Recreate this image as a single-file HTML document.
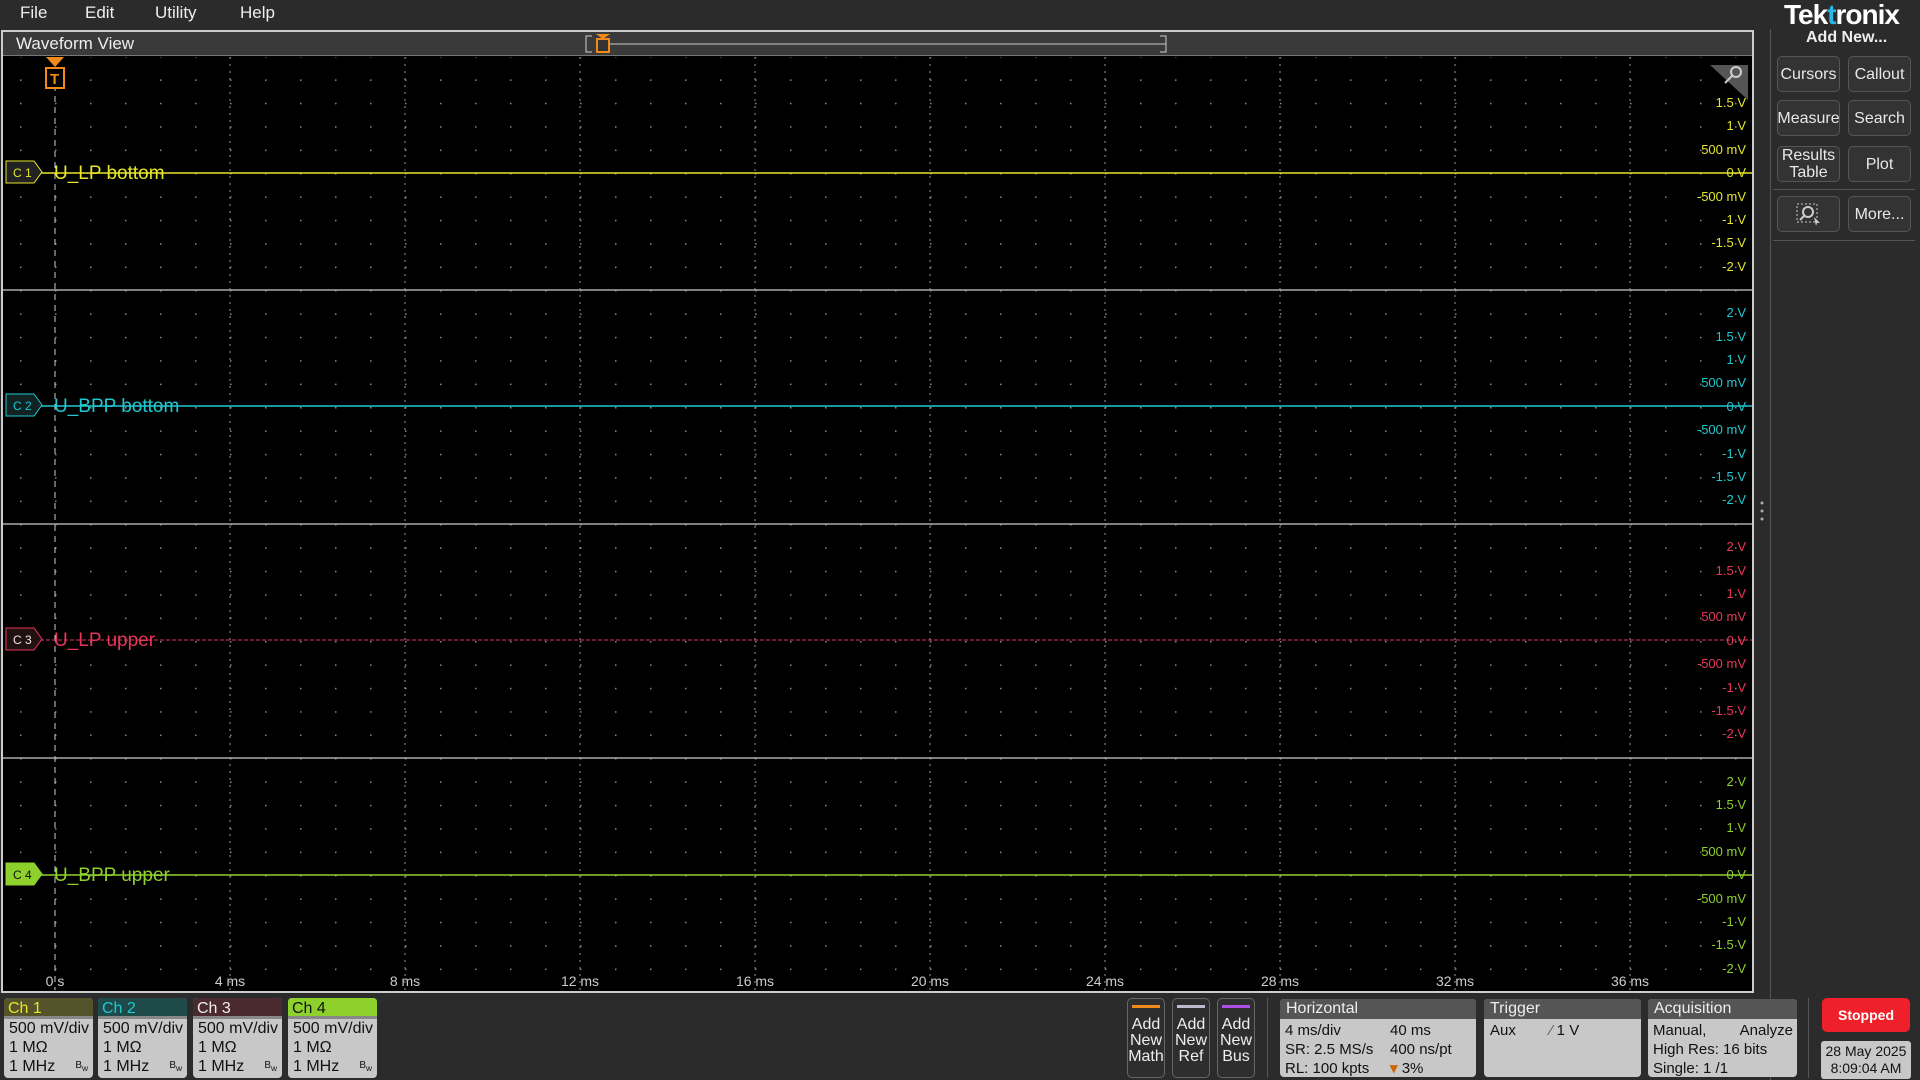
<!DOCTYPE html>
<html><head><meta charset="utf-8"><style>
*{margin:0;padding:0;box-sizing:border-box}
body{width:1920px;height:1080px;background:#2b2b2b;font-family:"Liberation Sans",sans-serif;color:#ddd;position:relative;overflow:hidden}
.a{position:absolute}
.menu{font-size:17px;color:#eee;top:3px}
.btn{position:absolute;width:63px;height:36px;background:#333;border:1px solid #555;border-radius:5px;color:#e8e8e8;font-size:16px;display:flex;align-items:center;justify-content:center;text-align:center;line-height:17px}
.ch{position:absolute;top:998px;width:89px;height:80px;background:#c8c8c8;border-radius:4px;overflow:hidden;color:#111;font-size:16px}
.ch .h{height:21px;padding-left:4px;font-size:16px;line-height:21px;border-bottom:3px solid #888}
.ch .r{padding-left:5px;line-height:19px;white-space:nowrap}
.ch .bw{position:absolute;right:5px;bottom:5px;font-size:10px}
.an{position:absolute;top:998px;width:38px;height:80px;background:#2e2e2e;border:1px solid #666;border-radius:5px;color:#eee;font-size:16px;text-align:center;line-height:16px;padding-top:18px}
.bx{position:absolute;top:999px;height:78px;background:#c8c8c8;border-radius:4px;overflow:hidden;color:#111;font-size:15px}
.bx .h{height:20px;background:#555;color:#eee;padding-left:6px;line-height:20px;font-size:16px}
</style></head><body>
<div class="a menu" style="left:20px">File</div>
<div class="a menu" style="left:85px">Edit</div>
<div class="a menu" style="left:155px">Utility</div>
<div class="a menu" style="left:240px">Help</div>
<div class="a" style="left:1784px;top:-1px;font-size:28px;font-weight:bold;color:#fff;letter-spacing:-1px">Tek<span style="color:#2ab7e6">t</span>ronix</div>
<div class="a" style="left:1770px;top:29px;width:150px;height:1051px;border-left:1px solid #555"></div>
<div class="a" style="left:1806px;top:29px;font-size:16px;font-weight:bold;color:#eee">Add New...</div>
<div class="btn" style="left:1777px;top:56px">Cursors</div>
<div class="btn" style="left:1848px;top:56px">Callout</div>
<div class="btn" style="left:1777px;top:100px">Measure</div>
<div class="btn" style="left:1848px;top:100px">Search</div>
<div class="btn" style="left:1777px;top:146px">Results<br>Table</div>
<div class="btn" style="left:1848px;top:146px">Plot</div>
<div class="a" style="left:1773px;top:189px;width:142px;border-top:1px solid #555"></div>
<div class="btn" style="left:1777px;top:196px"><svg width="30" height="26"><rect x="3" y="3" width="20" height="18" fill="none" stroke="#ccc" stroke-dasharray="2,2"/><circle cx="14" cy="11" r="5" fill="none" stroke="#ccc" stroke-width="2"/><line x1="10" y1="15" x2="6" y2="19" stroke="#ccc" stroke-width="2"/><path d="M20,16l6,6l-3,0l-1,3z" fill="#ccc"/></svg></div>
<div class="btn" style="left:1848px;top:196px">More...</div>
<div class="a" style="left:1773px;top:240px;width:142px;border-top:1px solid #555"></div>

<div class="a" style="left:1px;top:30px;width:1753px;height:963px;border:2px solid #ccc;background:#000"></div>
<div class="a" style="left:3px;top:32px;width:1749px;height:24px;background:#3a3a3a;border-bottom:1px solid #777;font-size:17px;color:#eee;padding-left:13px;line-height:24px">Waveform View</div>
<svg class="a" style="left:0;top:0" width="1920" height="1080" font-family="Liberation Sans">
<defs>
<pattern id="dots" x="55" y="56" width="35" height="23.4" patternUnits="userSpaceOnUse"><rect x="0" y="0" width="1.5" height="1.5" fill="#888"/></pattern>
</defs>
<rect x="3" y="57" width="1749" height="934" fill="url(#dots)"/>
<g stroke="#999" stroke-dasharray="2,5" stroke-width="1">
<line x1="230" y1="57" x2="230" y2="990"/><line x1="405" y1="57" x2="405" y2="990"/><line x1="580" y1="57" x2="580" y2="990"/><line x1="755" y1="57" x2="755" y2="990"/><line x1="930" y1="57" x2="930" y2="990"/><line x1="1105" y1="57" x2="1105" y2="990"/><line x1="1280" y1="57" x2="1280" y2="990"/><line x1="1455" y1="57" x2="1455" y2="990"/><line x1="1630" y1="57" x2="1630" y2="990"/>
</g>
<line x1="55" y1="85" x2="55" y2="990" stroke="#ccc" stroke-dasharray="6,5"/>
<g stroke="#aaa" stroke-width="1.5"><line x1="3" y1="290" x2="1752" y2="290"/><line x1="3" y1="524" x2="1752" y2="524"/><line x1="3" y1="758" x2="1752" y2="758"/></g>
<line x1="40" y1="173" x2="1752" y2="173" stroke="#e6e62a" stroke-width="1.5"/>
<line x1="40" y1="406" x2="1752" y2="406" stroke="#1fc8d0" stroke-width="1.5"/>
<line x1="40" y1="640" x2="1752" y2="640" stroke="#e8365a" stroke-width="1" stroke-dasharray="4,2"/>
<line x1="40" y1="875" x2="1752" y2="875" stroke="#8fd12c" stroke-width="1.5"/>
<polygon points="6,161 34,161 42,172 34,183 6,183" fill="#222" stroke="#e6e62a"/>
<polygon points="6,394 34,394 42,405 34,416 6,416" fill="#122" stroke="#1fc8d0"/>
<polygon points="6,628 34,628 42,639 34,650 6,650" fill="#211" stroke="#e8365a"/>
<polygon points="6,863 34,863 42,874 34,885 6,885" fill="#8fd12c" stroke="#8fd12c"/>
<g font-size="12"><text x="13" y="177" fill="#e6e62a">C 1</text><text x="13" y="410" fill="#1fc8d0">C 2</text><text x="13" y="644" fill="#e8e8e8">C 3</text><text x="13" y="879" fill="#111">C 4</text></g>
<g font-size="19"><text x="54" y="179" fill="#e6e62a">U_LP bottom</text><text x="54" y="412" fill="#1fc8d0">U_BPP bottom</text><text x="54" y="646" fill="#e8365a">U_LP upper</text><text x="54" y="881" fill="#8fd12c">U_BPP upper</text></g>
<polygon points="46,57 64,57 55,67" fill="#f08a1a"/>
<rect x="46" y="68" width="18" height="20" fill="#000" stroke="#f08a1a" stroke-width="2"/><text x="50" y="84" font-size="15" fill="#f08a1a" font-weight="bold">T</text>
<polygon points="1710,65 1748,65 1748,100" fill="#555"/><circle cx="1736" cy="72" r="5" fill="none" stroke="#ccc" stroke-width="2"/><line x1="1732" y1="76" x2="1725" y2="83" stroke="#ccc" stroke-width="2"/>
<line x1="596" y1="44" x2="1166" y2="44" stroke="#ccc"/><path d="M592,36h-6v16h6M1160,36h6v16h-6" stroke="#ccc" fill="none"/>
<polygon points="596,34 610,34 603,39" fill="#f08a1a"/><rect x="597" y="39" width="12" height="13" fill="#333" stroke="#f08a1a" stroke-width="2"/>
<g font-size="13" text-anchor="end">
<g fill="#e6e62a"><text x="1746" y="107">1.5 V</text><text x="1746" y="130">1 V</text><text x="1746" y="154">500 mV</text><text x="1746" y="177">0 V</text><text x="1746" y="201">-500 mV</text><text x="1746" y="224">-1 V</text><text x="1746" y="247">-1.5 V</text><text x="1746" y="271">-2 V</text></g>
<g fill="#1fc8d0"><text x="1746" y="317">2 V</text><text x="1746" y="341">1.5 V</text><text x="1746" y="364">1 V</text><text x="1746" y="387">500 mV</text><text x="1746" y="411">0 V</text><text x="1746" y="434">-500 mV</text><text x="1746" y="458">-1 V</text><text x="1746" y="481">-1.5 V</text><text x="1746" y="504">-2 V</text></g>
<g fill="#e8365a"><text x="1746" y="551">2 V</text><text x="1746" y="575">1.5 V</text><text x="1746" y="598">1 V</text><text x="1746" y="621">500 mV</text><text x="1746" y="645">0 V</text><text x="1746" y="668">-500 mV</text><text x="1746" y="692">-1 V</text><text x="1746" y="715">-1.5 V</text><text x="1746" y="738">-2 V</text></g>
<g fill="#8fd12c"><text x="1746" y="786">2 V</text><text x="1746" y="809">1.5 V</text><text x="1746" y="832">1 V</text><text x="1746" y="856">500 mV</text><text x="1746" y="879">0 V</text><text x="1746" y="903">-500 mV</text><text x="1746" y="926">-1 V</text><text x="1746" y="949">-1.5 V</text><text x="1746" y="973">-2 V</text></g>
</g>
<g font-size="14" fill="#ccc" text-anchor="middle"><text x="55" y="986">0 s</text><text x="230" y="986">4 ms</text><text x="405" y="986">8 ms</text><text x="580" y="986">12 ms</text><text x="755" y="986">16 ms</text><text x="930" y="986">20 ms</text><text x="1105" y="986">24 ms</text><text x="1280" y="986">28 ms</text><text x="1455" y="986">32 ms</text><text x="1630" y="986">36 ms</text></g>
<g fill="#aaa"><circle cx="1762" cy="503" r="1.5"/><circle cx="1762" cy="511" r="1.5"/><circle cx="1762" cy="519" r="1.5"/></g>
</svg>

<div class="ch" style="left:4px"><div class="h" style="background:#55532a;color:#e6e62a">Ch 1</div><div class="r">500 mV/div</div><div class="r">1 MΩ</div><div class="r">1 MHz</div><div class="bw">B<sub>w</sub></div></div>
<div class="ch" style="left:98px"><div class="h" style="background:#1f4a4a;color:#1fc8d0">Ch 2</div><div class="r">500 mV/div</div><div class="r">1 MΩ</div><div class="r">1 MHz</div><div class="bw">B<sub>w</sub></div></div>
<div class="ch" style="left:193px"><div class="h" style="background:#4a2a2e;color:#eee">Ch 3</div><div class="r">500 mV/div</div><div class="r">1 MΩ</div><div class="r">1 MHz</div><div class="bw">B<sub>w</sub></div></div>
<div class="ch" style="left:288px"><div class="h" style="background:#8fd12c;color:#111">Ch 4</div><div class="r">500 mV/div</div><div class="r">1 MΩ</div><div class="r">1 MHz</div><div class="bw">B<sub>w</sub></div></div>

<div class="an" style="left:1127px"><div class="a" style="left:4px;top:6px;width:28px;height:3px;background:#f08a1a"></div>Add<br>New<br>Math</div>
<div class="an" style="left:1172px"><div class="a" style="left:4px;top:6px;width:28px;height:3px;background:#bbc"></div>Add<br>New<br>Ref</div>
<div class="an" style="left:1217px"><div class="a" style="left:4px;top:6px;width:28px;height:3px;background:#b04ee8"></div>Add<br>New<br>Bus</div>
<div class="a" style="left:1267px;top:998px;height:80px;border-left:1px solid #555"></div>
<div class="bx" style="left:1280px;width:196px"><div class="h">Horizontal</div>
<div class="a" style="left:5px;top:22px;line-height:19px">4 ms/div<br>SR: 2.5 MS/s<br>RL: 100 kpts</div>
<div class="a" style="left:110px;top:22px;line-height:19px">40 ms<br>400 ns/pt<br><span style="color:#c60;font-weight:bold">▾</span> 3%</div></div>
<div class="bx" style="left:1484px;width:157px"><div class="h">Trigger</div>
<div class="a" style="left:6px;top:22px;line-height:19px">Aux</div><div class="a" style="left:66px;top:22px;line-height:19px"><span style="color:#557">⁄</span> 1 V</div></div>
<div class="bx" style="left:1648px;width:149px"><div class="h">Acquisition</div>
<div class="a" style="left:5px;top:22px;line-height:19px;width:140px">Manual, <span style="float:right">Analyze</span><br>High Res: 16 bits<br>Single: 1 /1</div></div>
<div class="a" style="left:1808px;top:998px;height:80px;border-left:1px solid #555"></div>
<div class="a" style="left:1822px;top:998px;width:88px;height:34px;background:#f0202a;border-radius:5px;color:#fff;font-size:14px;font-weight:bold;text-align:center;line-height:34px">Stopped</div>
<div class="a" style="left:1821px;top:1041px;width:90px;height:38px;background:#c8c8c8;border-radius:3px;color:#111;font-size:14px;text-align:center;line-height:17px;padding-top:2px">28 May 2025<br>8:09:04 AM</div>
</body></html>
